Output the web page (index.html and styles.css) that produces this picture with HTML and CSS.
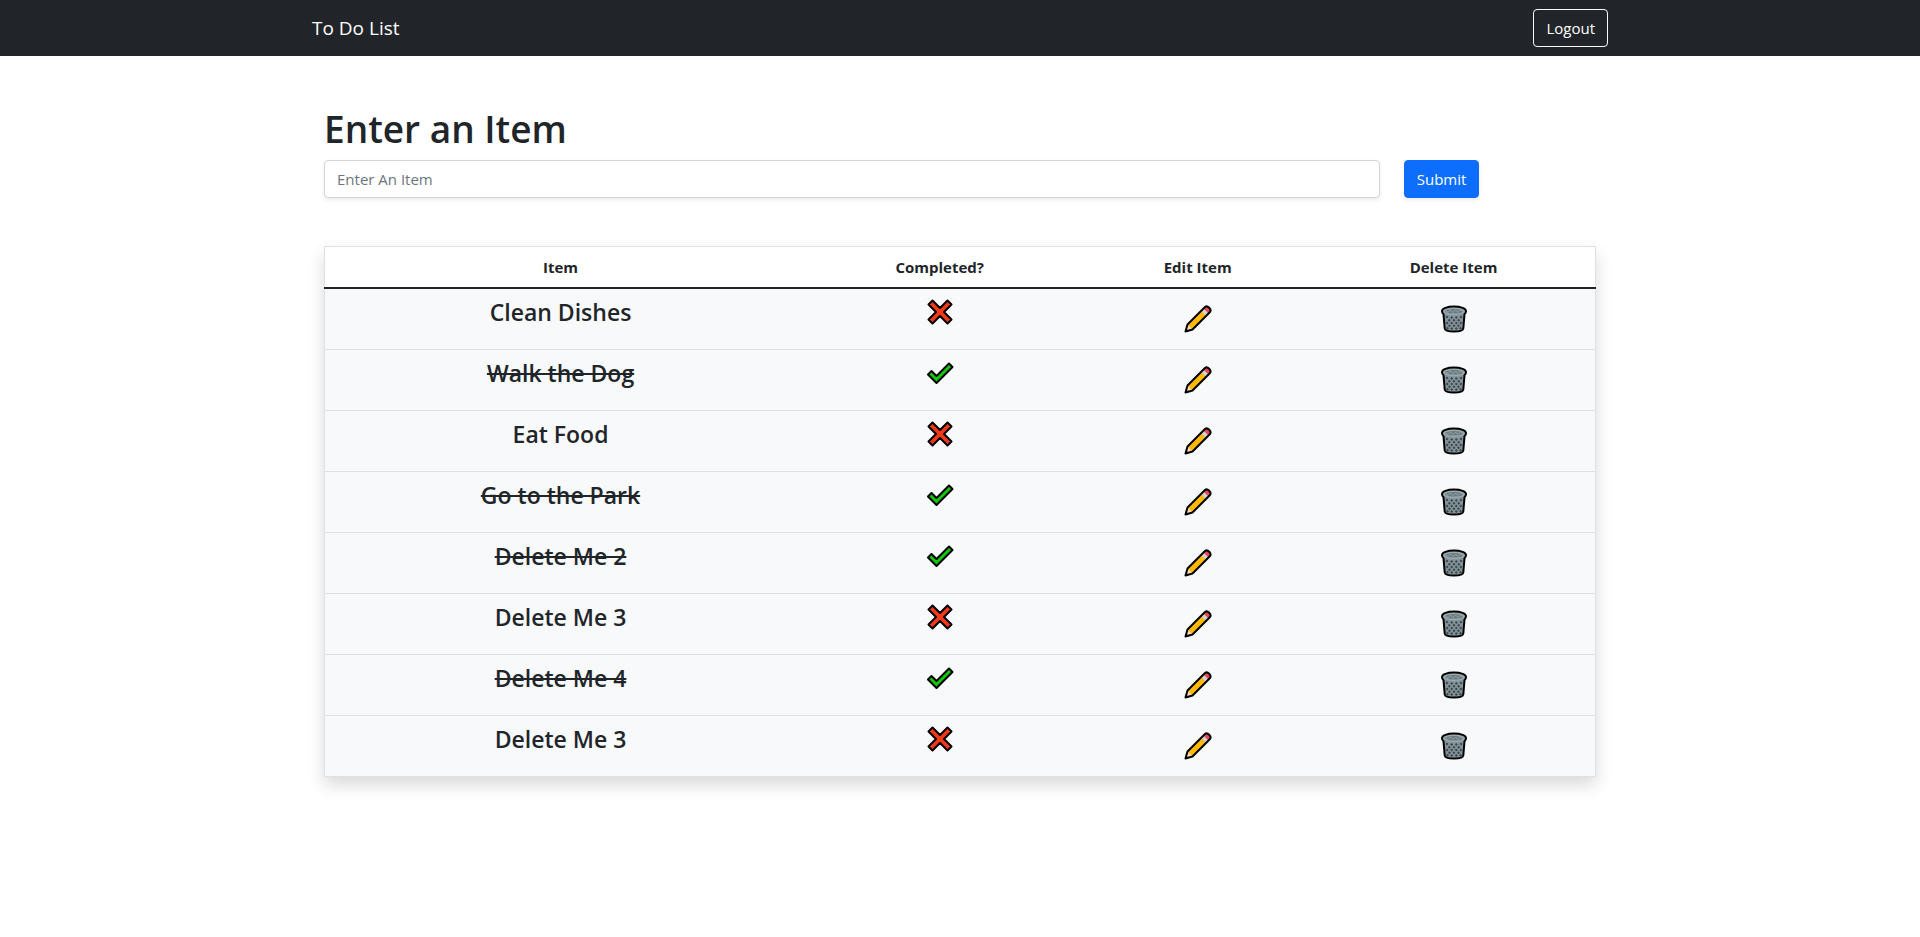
FILE: index.html
```html
<!DOCTYPE html>
<html lang="en">
<head>
<meta charset="utf-8">
<meta name="viewport" content="width=device-width, initial-scale=1">
<title>To Do List</title>
<link rel="stylesheet" href="styles.css">
</head>
<body>
<svg class="sprite" aria-hidden="true">
  <symbol id="cross" viewBox="0 0 28 28">
    <path d="M6.500 2.500 14 10l7.500-7.500 4 4L18 14l7.500 7.500-4 4L14 18l-7.500 7.500-4-4L10 14 2.500 6.500z" fill="#f03a17" stroke="#000" stroke-width="2" stroke-linejoin="round"/>
  </symbol>
  <symbol id="check" viewBox="0 0 28 28">
    <path d="M2 15.500 5.500 12l5 5L23 4.500l3.500 3.500L10.500 24z" fill="#16c60c" stroke="#000" stroke-width="2" stroke-linejoin="round"/>
  </symbol>
  <symbol id="pencil" viewBox="0 0 28 28">
    <path d="M1.500 26.500 3.500 19.500 19.500 3.500l5 5L8.500 24.500z" fill="#ffb900"/>
    <path d="M1.500 26.500 3.500 19.500l5 5z" fill="#ffdcc0"/>
    <path d="M1 27l1-3.500L4.500 26z" fill="#000"/>
    <path d="m17 6 3-3 5 5-3 3z" fill="#d2d2d2"/>
    <path d="m19.500 3.500 1.700-1.700c1.600-1.400 6.500 3 5 5l-1.700 1.700z" fill="#e74856"/>
    <path d="M1.500 26.500 3.500 19.500 21 2c2.500-2 7 2.500 5 5L8.500 24.500z" fill="none" stroke="#000" stroke-width="2" stroke-linejoin="round"/>
  </symbol>
  <symbol id="bin" viewBox="0 0 28 28">
    <path d="M2 6c0-2.500 5-4.500 12-4.500S26 3.500 26 6c0 1.500-.5 2.500-1.500 3.200L23.300 23.500C23 26 19 26.500 14 26.500S5 26 4.700 23.500L3.500 9.200C2.500 8.500 2 7.500 2 6z" fill="#84949a"/>
    <g fill="#3c484d">
      <path d="m7 10.500 1.500 1.500L7 13.500 5.500 12zM11.700 11l1.500 1.500-1.500 1.500-1.500-1.500zM16.300 11l1.500 1.500-1.500 1.500-1.500-1.500zM21 10.500l1.500 1.500-1.500 1.500-1.500-1.500zM9.300 13.700l1.500 1.500-1.500 1.500-1.500-1.500zM14 13.700l1.500 1.500-1.500 1.500-1.500-1.500zM18.700 13.700l1.500 1.500-1.500 1.500-1.500-1.500zM7.200 16.500 8.700 18l-1.500 1.500L5.700 18zM11.700 16.500l1.500 1.500-1.500 1.500-1.500-1.500zM16.300 16.500l1.500 1.500-1.500 1.500-1.500-1.500zM20.800 16.500l1.500 1.500-1.500 1.500-1.500-1.500zM9.500 19.300l1.500 1.500-1.500 1.500L8 20.800zM14 19.300l1.500 1.500-1.500 1.500-1.500-1.500zM18.500 19.300l1.500 1.500-1.500 1.500-1.500-1.500zM7.500 21.800 9 23.300l-1.500 1.500L6 23.300zM11.700 22l1.500 1.500-1.500 1.500-1.500-1.500zM16.300 22l1.500 1.500-1.500 1.500-1.500-1.500zM20.500 21.800l1.500 1.500-1.500 1.500-1.500-1.500z"/>
    </g>
    <ellipse cx="14" cy="6" rx="11.500" ry="4" fill="#9aabb0"/>
    <ellipse cx="14" cy="6.300" rx="9" ry="2.300" fill="#69797e"/>
    <path d="m6 6 2 1.500L10.500 5 13 7.500 15.500 5 18 7.500 20.500 5 22.500 6.500" fill="none" stroke="#9aabb0" stroke-width=".9"/>
    <path d="M2 6c0-2.500 5-4.500 12-4.500S26 3.500 26 6c0 1.500-.5 2.500-1.500 3.200L23.300 23.500C23 26 19 26.500 14 26.500S5 26 4.700 23.500L3.500 9.200C2.500 8.500 2 7.500 2 6z" fill="none" stroke="#000" stroke-width="2" stroke-linejoin="round"/>
  </symbol>
</svg>

<header class="navbar">
  <nav class="navbar-inner">
    <a class="brand" href="#">To Do List</a>
    <button class="btn btn-outline" type="button">Logout</button>
  </nav>
</header>

<main class="content">
  <form class="item-form">
    <h1 class="title"><label for="item">Enter an Item</label></h1>
    <div class="form-row">
      <input class="field" id="item" type="text" placeholder="Enter An Item">
      <button class="btn btn-primary" type="submit">Submit</button>
    </div>
  </form>

  <table class="items">
    <thead>
      <tr><th class="col-item" scope="col">Item</th><th class="col-done" scope="col">Completed?</th><th class="col-edit" scope="col">Edit Item</th><th class="col-delete" scope="col">Delete Item</th></tr>
    </thead>
    <tbody>
      <tr>
        <td><h2 class="name">Clean Dishes</h2></td>
        <td><svg class="icon status" role="img" aria-label="Not completed"><use href="#cross"/></svg></td>
        <td><button class="action" type="button" aria-label="Edit"><svg class="icon"><use href="#pencil"/></svg></button></td>
        <td><button class="action" type="button" aria-label="Delete"><svg class="icon"><use href="#bin"/></svg></button></td>
      </tr>
      <tr>
        <td><h2 class="name done">Walk the Dog</h2></td>
        <td><svg class="icon status" role="img" aria-label="Completed"><use href="#check"/></svg></td>
        <td><button class="action" type="button" aria-label="Edit"><svg class="icon"><use href="#pencil"/></svg></button></td>
        <td><button class="action" type="button" aria-label="Delete"><svg class="icon"><use href="#bin"/></svg></button></td>
      </tr>
      <tr>
        <td><h2 class="name">Eat Food</h2></td>
        <td><svg class="icon status" role="img" aria-label="Not completed"><use href="#cross"/></svg></td>
        <td><button class="action" type="button" aria-label="Edit"><svg class="icon"><use href="#pencil"/></svg></button></td>
        <td><button class="action" type="button" aria-label="Delete"><svg class="icon"><use href="#bin"/></svg></button></td>
      </tr>
      <tr>
        <td><h2 class="name done">Go to the Park</h2></td>
        <td><svg class="icon status" role="img" aria-label="Completed"><use href="#check"/></svg></td>
        <td><button class="action" type="button" aria-label="Edit"><svg class="icon"><use href="#pencil"/></svg></button></td>
        <td><button class="action" type="button" aria-label="Delete"><svg class="icon"><use href="#bin"/></svg></button></td>
      </tr>
      <tr>
        <td><h2 class="name done">Delete Me 2</h2></td>
        <td><svg class="icon status" role="img" aria-label="Completed"><use href="#check"/></svg></td>
        <td><button class="action" type="button" aria-label="Edit"><svg class="icon"><use href="#pencil"/></svg></button></td>
        <td><button class="action" type="button" aria-label="Delete"><svg class="icon"><use href="#bin"/></svg></button></td>
      </tr>
      <tr>
        <td><h2 class="name">Delete Me 3</h2></td>
        <td><svg class="icon status" role="img" aria-label="Not completed"><use href="#cross"/></svg></td>
        <td><button class="action" type="button" aria-label="Edit"><svg class="icon"><use href="#pencil"/></svg></button></td>
        <td><button class="action" type="button" aria-label="Delete"><svg class="icon"><use href="#bin"/></svg></button></td>
      </tr>
      <tr>
        <td><h2 class="name done">Delete Me 4</h2></td>
        <td><svg class="icon status" role="img" aria-label="Completed"><use href="#check"/></svg></td>
        <td><button class="action" type="button" aria-label="Edit"><svg class="icon"><use href="#pencil"/></svg></button></td>
        <td><button class="action" type="button" aria-label="Delete"><svg class="icon"><use href="#bin"/></svg></button></td>
      </tr>
      <tr>
        <td><h2 class="name">Delete Me 3</h2></td>
        <td><svg class="icon status" role="img" aria-label="Not completed"><use href="#cross"/></svg></td>
        <td><button class="action" type="button" aria-label="Edit"><svg class="icon"><use href="#pencil"/></svg></button></td>
        <td><button class="action" type="button" aria-label="Delete"><svg class="icon"><use href="#bin"/></svg></button></td>
      </tr>
    </tbody>
  </table>
</main>
</body>
</html>
```

FILE: styles.css
```css
* {
  box-sizing: border-box;
}

body {
  margin: 0;
  background: #fff;
  color: #212529;
  font-family: "Segoe UI", "Open Sans", "Noto Sans", sans-serif;
  font-size: 15px;
  line-height: 24px;
}

.sprite {
  display: none;
}

.navbar {
  background: #212529;
}

.navbar-inner {
  display: flex;
  align-items: center;
  justify-content: space-between;
  max-width: 1320px;
  margin: 0 auto;
  padding: 9px 12px;
}

.brand {
  color: #fff;
  font-size: 19px;
  line-height: 30px;
  text-decoration: none;
}

.btn {
  height: 38px;
  padding: 0 12px;
  border: 1px solid;
  border-radius: 4px;
  color: #fff;
  font: inherit;
  cursor: pointer;
}

.btn-outline {
  border-color: #f8f9fa;
  background: transparent;
}

.btn-primary {
  border-color: #0d6efd;
  background: #0d6efd;
  box-shadow: 0 2px 4px rgba(0, 0, 0, 0.075);
}

.content {
  max-width: 1320px;
  margin: 0 auto;
  padding: 48px 24px;
}

.title {
  margin: 0 0 6px;
  font-size: 37px;
  font-weight: 600;
  line-height: 50px;
}

.form-row {
  display: flex;
  gap: 24px;
}

.field {
  width: 83%;
  height: 38px;
  padding: 0 12px;
  border: 1px solid #ced4da;
  border-radius: 4px;
  box-shadow: 0 2px 4px rgba(0, 0, 0, 0.075);
  color: #212529;
  font: inherit;
}

.field::placeholder {
  color: #6c757d;
  opacity: 1;
}

.items {
  width: 100%;
  margin-top: 48px;
  border: 1px solid #dee2e6;
  border-collapse: collapse;
  box-shadow: 0 8px 16px rgba(0, 0, 0, 0.15);
  table-layout: fixed;
  text-align: center;
}

.items th {
  padding: 8px;
  border-bottom: 2px solid #212529;
  font-size: 15px;
  font-weight: 700;
}

.items td {
  padding: 8px;
  border-bottom: 1px solid #dee2e6;
  background: #f8f9fa;
  vertical-align: top;
}

.col-item {
  width: 37.1%;
}

.col-done {
  width: 22.6%;
}

.col-edit {
  width: 18%;
}

.col-delete {
  width: 22.3%;
}

.name {
  margin: 0;
  font-size: 23px;
  font-weight: 600;
  line-height: 31px;
}

.done {
  text-decoration: line-through;
  text-decoration-thickness: 2px;
}

.icon {
  display: block;
  width: 28px;
  height: 28px;
  margin: 0 auto;
}

.status {
  margin-top: 1px;
}

.action {
  display: block;
  width: 54px;
  height: 44px;
  margin: 0 auto;
  padding: 0;
  border: 0;
  background: transparent;
  cursor: pointer;
}
```
